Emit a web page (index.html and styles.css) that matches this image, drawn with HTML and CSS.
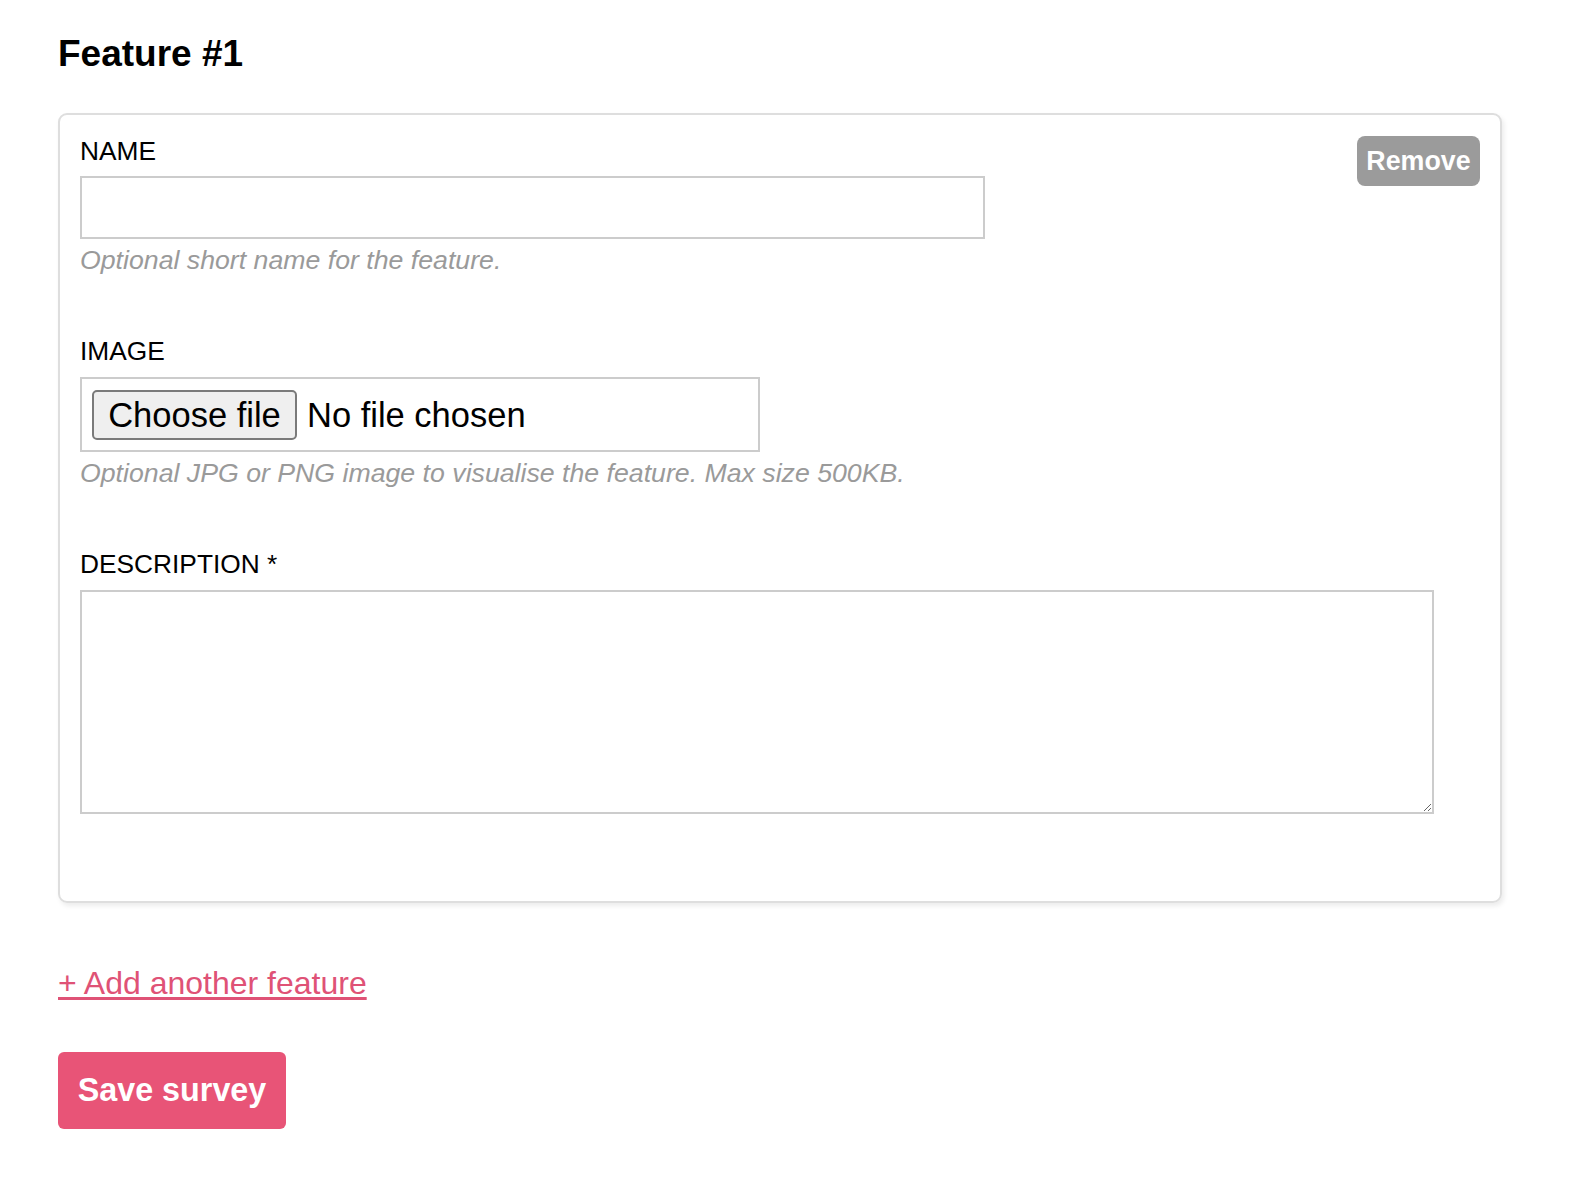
FILE: index.html
```html
<!DOCTYPE html>
<html lang="en">
<head>
<meta charset="utf-8">
<title>Feature form</title>
<link rel="stylesheet" href="styles.css">
</head>
<body>
<main class="page">
  <h2 class="feature-title">Feature #1</h2>
  <section class="card">
    <button type="button" class="btn-remove">Remove</button>
    <div class="field">
      <label class="field-label label-name" for="name">NAME</label>
      <input class="text-input" id="name" type="text">
      <p class="help">Optional short name for the feature.</p>
    </div>
    <div class="field">
      <label class="field-label">IMAGE</label>
      <div class="file-box">
        <span class="file-btn">Choose file</span>
        <span class="file-status">No file chosen</span>
      </div>
      <p class="help">Optional JPG or PNG image to visualise the feature. Max size 500KB.</p>
    </div>
    <div class="field">
      <label class="field-label" for="desc">DESCRIPTION *</label>
      <textarea class="textarea" id="desc"></textarea>
    </div>
  </section>
  <a class="add-link" href="#">+ Add another feature</a>
  <div class="actions">
    <button type="button" class="btn-save">Save survey</button>
  </div>
</main>
</body>
</html>
```
FILE: styles.css
```css
* { box-sizing: border-box; }
body {
  margin: 0;
  background: #fff;
  font-family: "Liberation Sans", Arial, sans-serif;
  color: #000;
}
.page {
  padding: 33px 60px 40px 58px;
}
.feature-title {
  margin: 0 0 38px 0;
  font-size: 37px;
  font-weight: bold;
  line-height: 42px;
}
.card {
  width: 1444px;
  border: 2px solid #dedede;
  border-radius: 9px;
  padding: 21px 20px 87px 20px;
  box-shadow: 2px 3px 5px rgba(0,0,0,0.08);
}
.btn-remove {
  float: right;
  margin-top: 0;
  width: 123px;
  height: 50px;
  padding: 0;
  border: none;
  border-radius: 8px;
  background: #9b9b9b;
  color: #fff;
  font-family: "Liberation Sans", Arial, sans-serif;
  font-size: 26.8px;
  font-weight: bold;
  line-height: 50px;
}
.field { margin-bottom: 61px; }
.field:last-child { margin-bottom: 0; }
.field-label {
  display: block;
  font-size: 26.3px;
  line-height: 30px;
  margin-bottom: 11px;
}
.label-name { margin-bottom: 10px; }
.text-input {
  display: block;
  width: 905px;
  height: 63px;
  border: 2px solid #cccccc;
  border-radius: 0;
  font-size: 26px;
  padding: 0 10px;
  outline: none;
}
.help {
  margin: 6px 0 0 0;
  font-size: 26.7px;
  line-height: 30px;
  font-style: italic;
  color: #9a9a9a;
}
.file-box {
  display: flex;
  align-items: center;
  gap: 10px;
  width: 680px;
  height: 75px;
  border: 2px solid #cccccc;
  padding: 0 10px;
}
.file-btn {
  display: block;
  width: 205px;
  height: 50px;
  border: 2px solid #7a7a7a;
  border-radius: 5px;
  background: #efefef;
  font-size: 34.5px;
  line-height: 46px;
  text-align: center;
}
.file-status {
  font-size: 34.5px;
  line-height: 40px;
}
.textarea {
  display: block;
  width: 1354px;
  height: 224px;
  border: 2px solid #cccccc;
  border-radius: 0;
  font-size: 26px;
  padding: 10px;
  outline: none;
  resize: both;
}
.add-link {
  display: inline-block;
  margin-top: 62px;
  font-size: 32px;
  line-height: 37px;
  color: #df5276;
  text-decoration: underline;
  text-underline-offset: 3px;
}
.actions { margin-top: 50px; }
.btn-save {
  width: 228px;
  height: 77px;
  padding: 0;
  border: none;
  border-radius: 6px;
  background: #e85477;
  color: #fff;
  font-family: "Liberation Sans", Arial, sans-serif;
  font-size: 32.3px;
  font-weight: bold;
  line-height: 77px;
}
```
